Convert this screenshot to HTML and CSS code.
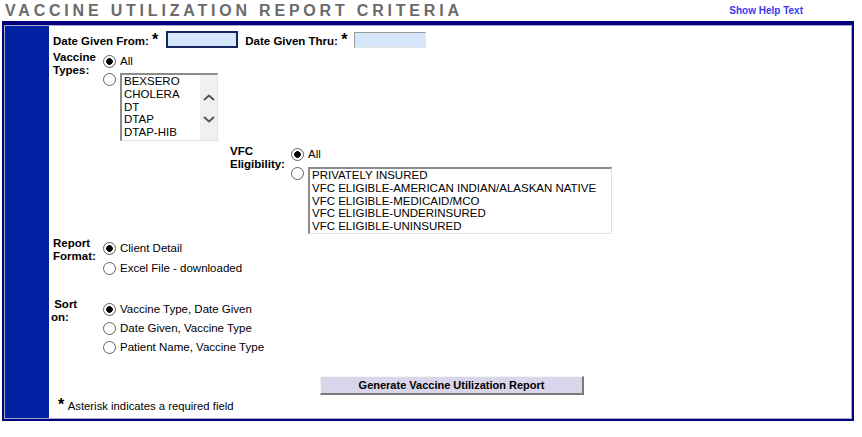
FILE: index.html
```html
<!DOCTYPE html>
<html>
<head>
  <link rel="stylesheet" href="styles.css">
</head>
<body class="body">
<div class="topbar">
  <span class="title">VACCINE UTILIZATION REPORT CRITERIA</span>
  <a class="help" href="#">Show Help Text</a>
</div>
<div class="frame">
  <div class="side"></div>
  <form class="main">
    <div class="dates">
      <span class="lbl">Date Given From: <span class="req">*</span></span>
      <input class="date focused" type="text">
      <span class="lbl">Date Given Thru: <span class="req">*</span></span>
      <input class="date" type="text">
    </div>

    <div class="sect vaccine">
      <div class="lbl key">Vaccine<br>Types:</div>
      <div class="opts">
        <label class="opt"><input type="radio" name="vt" checked>All</label>
        <div class="opt boxopt">
          <input type="radio" name="vt">
          <div class="listbox vlist">
            <div class="items">
              <div>BEXSERO</div>
              <div>CHOLERA</div>
              <div>DT</div>
              <div>DTAP</div>
              <div>DTAP-HIB</div>
            </div>
            <div class="sbar">
              <svg width="12" height="7" viewBox="0 0 12 7"><polyline points="1,6 6,1.5 11,6" fill="none" stroke="#555" stroke-width="2"/></svg>
              <svg width="12" height="7" viewBox="0 0 12 7"><polyline points="1,1 6,5.5 11,1" fill="none" stroke="#555" stroke-width="2"/></svg>
            </div>
          </div>
        </div>
      </div>
    </div>

    <div class="sect vfc">
      <div class="lbl key">VFC<br>Eligibility:</div>
      <div class="opts">
        <label class="opt"><input type="radio" name="vfc" checked>All</label>
        <div class="opt boxopt">
          <input type="radio" name="vfc">
          <div class="listbox flist">
            <div class="items">
              <div>PRIVATELY INSURED</div>
              <div>VFC ELIGIBLE-AMERICAN INDIAN/ALASKAN NATIVE</div>
              <div>VFC ELIGIBLE-MEDICAID/MCO</div>
              <div>VFC ELIGIBLE-UNDERINSURED</div>
              <div>VFC ELIGIBLE-UNINSURED</div>
            </div>
          </div>
        </div>
      </div>
    </div>

    <div class="sect format">
      <div class="lbl key">Report<br>Format:</div>
      <div class="opts">
        <label class="opt row20"><input type="radio" name="fmt" checked>Client Detail</label>
        <label class="opt row20"><input type="radio" name="fmt">Excel File - downloaded</label>
      </div>
    </div>

    <div class="sect sort">
      <div class="lbl key sortkey">&nbsp;Sort<br>on:</div>
      <div class="opts">
        <label class="opt row19"><input type="radio" name="srt" checked>Vaccine Type, Date Given</label>
        <label class="opt row19"><input type="radio" name="srt">Date Given, Vaccine Type</label>
        <label class="opt row19"><input type="radio" name="srt">Patient Name, Vaccine Type</label>
      </div>
    </div>

    <div class="actions">
      <button type="button" class="gen">Generate Vaccine Utilization Report</button>
    </div>

    <div class="note"><span class="req">*</span> Asterisk indicates a required field</div>
  </form>
</div>
</body>
</html>
```

FILE: styles.css
```css
.body { margin:0; background:#FFFFFF; font-family:"Liberation Sans",Arial,sans-serif; color:#000000; font-size:11.5px; }

.topbar { display:flex; align-items:center; height:21px; }
.title { padding-left:5px; font-size:16px; font-weight:bold; letter-spacing:3.8px; color:#6b6b6b; }
.help { margin-left:auto; margin-right:59px; font-size:10px; font-weight:bold; color:#3a3aef; text-decoration:none; }

.frame { display:flex; margin-left:2px; width:852px; box-sizing:border-box; border:2px solid #000080; border-top-width:4px; }
.side { width:44px; background:#0022a3; border:1px solid #a8a8c8; border-right:none; }
.main { flex:1; display:flex; flex-direction:column; padding:5px 0 5px 4px; border:1px solid #a8a8c8; border-left:none; margin:0; }

.lbl { font-weight:bold; font-size:11.5px; line-height:13px; }
.req { font-weight:bold; font-size:16px; vertical-align:top; line-height:10px; }

.dates { display:flex; align-items:center; height:17px; }
.dates .lbl { margin-top:3px; }
.date { box-sizing:border-box; width:72px; height:17px; margin:0 7px 0 8px; padding:0 2px; background:#d6e7fc; border:1px solid #9a9a9a; border-right-color:#e6e6e6; border-bottom-color:#e6e6e6; font:inherit; }
.date.focused { border:2px solid #16265e; }
.dates .date:last-child { margin-left:7px; height:16px; }

.sect { display:flex; }
.key { flex:none; width:50px; padding-top:2px; }
.opts { display:flex; flex-direction:column; }
.opt { display:flex; align-items:center; height:18px; line-height:13px; }
.boxopt { align-items:flex-start; height:auto; }
.boxopt input { margin-top:4px; }
.row20 { height:20px; }
.row19 { height:19px; }

.opt input { -webkit-appearance:none; appearance:none; flex:none; width:13px; height:13px; margin:0 4px 0 0; box-sizing:border-box; border:1px solid #5f5f5f; border-radius:50%; background:#fff; }
.opt input:checked { background:radial-gradient(circle, #000 0, #000 3px, #fff 3.6px); }

.vaccine { margin-top:1px; }
.vaccine .opts { margin-top:3px; }
.vaccine .boxopt { margin-top:3px; }

.listbox { display:flex; box-sizing:border-box; border:2px solid #8c8c8c; border-right:1px solid #e2e2e2; border-bottom:1px solid #e2e2e2; background:#fff; }
.items { flex:1; padding:0 2px; line-height:12.8px; }
.vlist { width:98px; height:68px; }
.sbar { width:17px; background:#f0f0f0; display:flex; flex-direction:column; align-items:center; padding-top:19px; gap:15px; }
.flist { width:304px; height:67px; }

.vfc { margin:2px 0 0 177px; }
.vfc .key { width:61px; }
.vfc .opts { margin-top:2px; }
.vfc .boxopt { margin-top:4px; }

.format { margin-top:2px; }
.format .key { padding-top:1px; }
.format .opts { margin-top:2px; }

.sort { margin-top:20px; }
.sort .key { padding-top:0; }
.sort .opts { margin-top:2px; }
.sortkey { margin-left:-2px; width:52px; }

.actions { display:flex; justify-content:center; margin-top:19px; }
.gen { width:264px; height:19px; padding:0; background:#d9d5ea; border:1px solid #f4f4f4; border-right:2px solid #7a7a7a; border-bottom:2px solid #7a7a7a; font-family:"Liberation Sans",Arial,sans-serif; font-size:11px; font-weight:bold; color:#000; }

.note { margin:5px 0 0 5px; height:13px; line-height:13px; font-size:11.3px; }
.note .req { margin-right:1px; }
```
